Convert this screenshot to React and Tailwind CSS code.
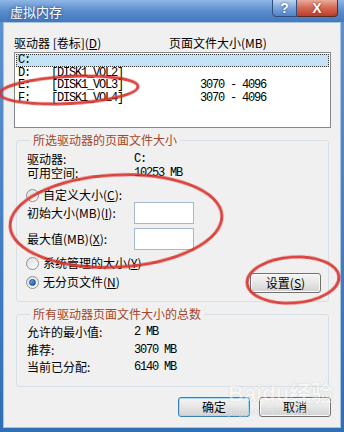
import React from 'react';

const cjk = { fontFamily: '"Noto Sans CJK SC", "Liberation Sans", sans-serif' };
const mono = { fontFamily: '"Liberation Mono", "Noto Sans CJK SC", monospace' };

const Radio = ({ checked }) => (
  <span className="w-[13px] h-[13px] rounded-full border border-[#8f9091] bg-linear-to-br from-[#dcdcdc] to-[#ffffff] flex items-center justify-center shrink-0">
    {checked && (
      <span className="w-[7px] h-[7px] rounded-full bg-linear-to-br from-[#6fb3f0] to-[#0d4fae] border border-[#24508c]" />
    )}
  </span>
);

const Button = ({ children, primary, className = '' }) => (
  <button
    className={`h-[20px] rounded-[3px] border text-[12px] leading-none text-black bg-linear-to-b from-[#f6f6f6] via-[#e6e6e6] to-[#d2d2d2] ${
      primary ? 'border-[#3c7fb1] shadow-[inset_0_0_0_1px_#a7d8f5]' : 'border-[#707070] shadow-[inset_0_0_0_1px_#fbfbfb]'
    } ${className}`}
    style={cjk}
  >
    {children}
  </button>
);

const GroupBox = ({ title, children, className = '' }) => (
  <fieldset className={`mx-[2px] border border-[#d5dfe5] rounded-[3px] ${className}`}>
    <legend className="ml-[3px] px-[3px] text-[12px] leading-[14px] text-[#a3462a]" style={cjk}>
      {title}
    </legend>
    {children}
  </fieldset>
);

const Row = ({ label, value, className = '' }) => (
  <div className={`flex items-center h-[14px] ${className}`}>
    <span className="w-[107px] text-[12px] leading-[14px]" style={cjk}>{label}</span>
    <span className="text-[12px] tracking-[-1.2px] leading-[14px]" style={mono}>{value}</span>
  </div>
);

const drives = [
  { letter: 'C:', vol: '', size: '' },
  { letter: 'D:', vol: '[DISK1_VOL2]', size: '' },
  { letter: 'E:', vol: '[DISK1_VOL3]', size: '3070 - 4096' },
  { letter: 'F:', vol: '[DISK1_VOL4]', size: '3070 - 4096' },
];

export default function App() {
  return (
    <div className="relative w-[344px] h-[432px] overflow-hidden bg-linear-to-b from-[#5f93d0] to-[#2f6fb7] flex flex-col text-black">
      {/* title bar */}
      <div className="h-[22px] flex items-start bg-linear-to-b from-[#8fb6e6] via-[#5a8ccc] to-[#4479bd] shrink-0">
        <span className="ml-[10px] mt-[3px] text-[13px] leading-[17px] text-white [text-shadow:0_0_3px_#1d3f6e]" style={cjk}>
          虚拟内存
        </span>
        <div className="ml-auto mr-[6px] flex -mt-[2px]">
          <div className="w-[25px] h-[19px] rounded-bl-[4px] border border-[#2d4f7c] bg-linear-to-b from-[#c7daf2] via-[#7ea7dc] to-[#4f82c4] flex items-center justify-center text-white font-bold text-[14px] leading-none [text-shadow:0_0_2px_#1b3a66]" style={{ fontFamily: '"Liberation Sans", sans-serif' }}>
            ?
          </div>
          <div className="w-[41px] h-[19px] rounded-br-[4px] border border-l-0 border-[#5c2a24] bg-linear-to-b from-[#eab3a6] via-[#d66a55] to-[#bf3b28] flex items-center justify-center text-white font-bold text-[14px] leading-none [text-shadow:0_0_2px_#5a1a10]" style={{ fontFamily: '"Liberation Sans", sans-serif' }}>
            X
          </div>
        </div>
      </div>

      {/* body */}
      <div className="flex-1 mx-[3px] mb-[4px] bg-[#f0f0f0] border border-[#a9c2de] pt-[13px] pl-[10px] pr-[9px] flex flex-col">
        <div className="flex h-[14px] items-center text-[12px] leading-[14px]" style={cjk}>
          <span className="w-[155px]">驱动器 [卷标](<u>D</u>)</span>
          <span>页面文件大小(MB)</span>
        </div>

        <div className="mt-[2px] h-[76px] bg-white border border-[#828790] p-px">
          {drives.map((d, i) => (
            <div
              key={d.letter}
              className={`flex items-center h-[12.5px] pl-[2px] text-[12px] tracking-[-1.2px] leading-none ${
                i === 0 ? 'bg-[#c4e3f6] outline outline-1 outline-dotted outline-[#333] -outline-offset-1' : ''
              }`}
              style={mono}
            >
              <span className="w-[33px]">{d.letter}</span>
              <span className="w-[149px]">{d.vol}</span>
              <span>{d.size}</span>
            </div>
          ))}
        </div>

        <GroupBox title="所选驱动器的页面文件大小" className="mt-[5px] pl-[10px] pr-[7px] pt-[5px] pb-[8px]">
          <Row label="驱动器:" value="C:" />
          <Row label="可用空间:" value="10253 MB" />
          <div className="mt-[8px] h-[14px] flex items-center gap-[4px] -ml-[1px]">
            <Radio />
            <span className="text-[12px] leading-[14px]" style={cjk}>自定义大小(<u>C</u>):</span>
          </div>
          <div className="flex items-center h-[22px]">
            <span className="w-[107px] text-[12px] leading-[14px]" style={cjk}>初始大小(MB)(<u>I</u>):</span>
            <div className="w-[60px] h-[22px] border border-[#a3b7cf] bg-white" />
          </div>
          <div className="flex items-center h-[22px] mt-[4px]">
            <span className="w-[107px] text-[12px] leading-[14px]" style={cjk}>最大值(MB)(<u>X</u>):</span>
            <div className="w-[60px] h-[22px] border border-[#a3b7cf] bg-white" />
          </div>
          <div className="mt-[6px] flex items-start">
            <div className="flex flex-col gap-[5px] -ml-[1px]">
              <div className="h-[14px] flex items-center gap-[4px]">
                <Radio />
                <span className="text-[12px] leading-[14px]" style={cjk}>系统管理的大小(<u>Y</u>)</span>
              </div>
              <div className="h-[14px] flex items-center gap-[4px]">
                <Radio checked />
                <span className="text-[12px] leading-[14px]" style={cjk}>无分页文件(<u>N</u>)</span>
              </div>
            </div>
            <Button className="ml-auto mt-[17px] w-[71px] h-[19px]">设置(<u>S</u>)</Button>
          </div>
        </GroupBox>

        <GroupBox title="所有驱动器页面文件大小的总数" className="mt-[5px] pl-[10px] pt-[4px] pb-[12px]">
          <Row label="允许的最小值:" value="2 MB" />
          <Row label="推荐:" value="3070 MB" className="mt-[4px]" />
          <Row label="当前已分配:" value="6140 MB" className="mt-[3px]" />
        </GroupBox>

        <div className="mt-[10px] flex justify-end gap-[9px]">
          <Button primary className="w-[72px]">确定</Button>
          <Button className="w-[72px]">取消</Button>
        </div>
      </div>

      {/* watermark */}
      <div className="absolute left-[228px] top-[382px] pointer-events-none flex flex-col items-start opacity-40">
        <span className="text-[22px] leading-[24px] font-bold text-white [text-shadow:0_0_1px_#777]" style={{ fontFamily: '"Liberation Sans", "Noto Sans CJK SC", sans-serif' }}>
          Baidu经验
        </span>
        <span className="text-[10px] leading-[12px] text-white [text-shadow:0_0_1px_#777]" style={{ fontFamily: '"Liberation Sans", sans-serif' }}>
          jingyan.baidu.com
        </span>
      </div>

      {/* red annotation ellipses */}
      <svg className="absolute inset-0 pointer-events-none" width="344" height="432" viewBox="0 0 344 432">
        <g fill="none" stroke="#d8302a" strokeWidth="3" opacity="0.9">
          <ellipse cx="69" cy="90" rx="69" ry="13.5" transform="rotate(-3 69 90)" />
          <ellipse cx="116" cy="221" rx="106" ry="46" transform="rotate(-3 116 221)" />
          <ellipse cx="293" cy="280" rx="46" ry="23" transform="rotate(-4 293 280)" />
        </g>
      </svg>
    </div>
  );
}
